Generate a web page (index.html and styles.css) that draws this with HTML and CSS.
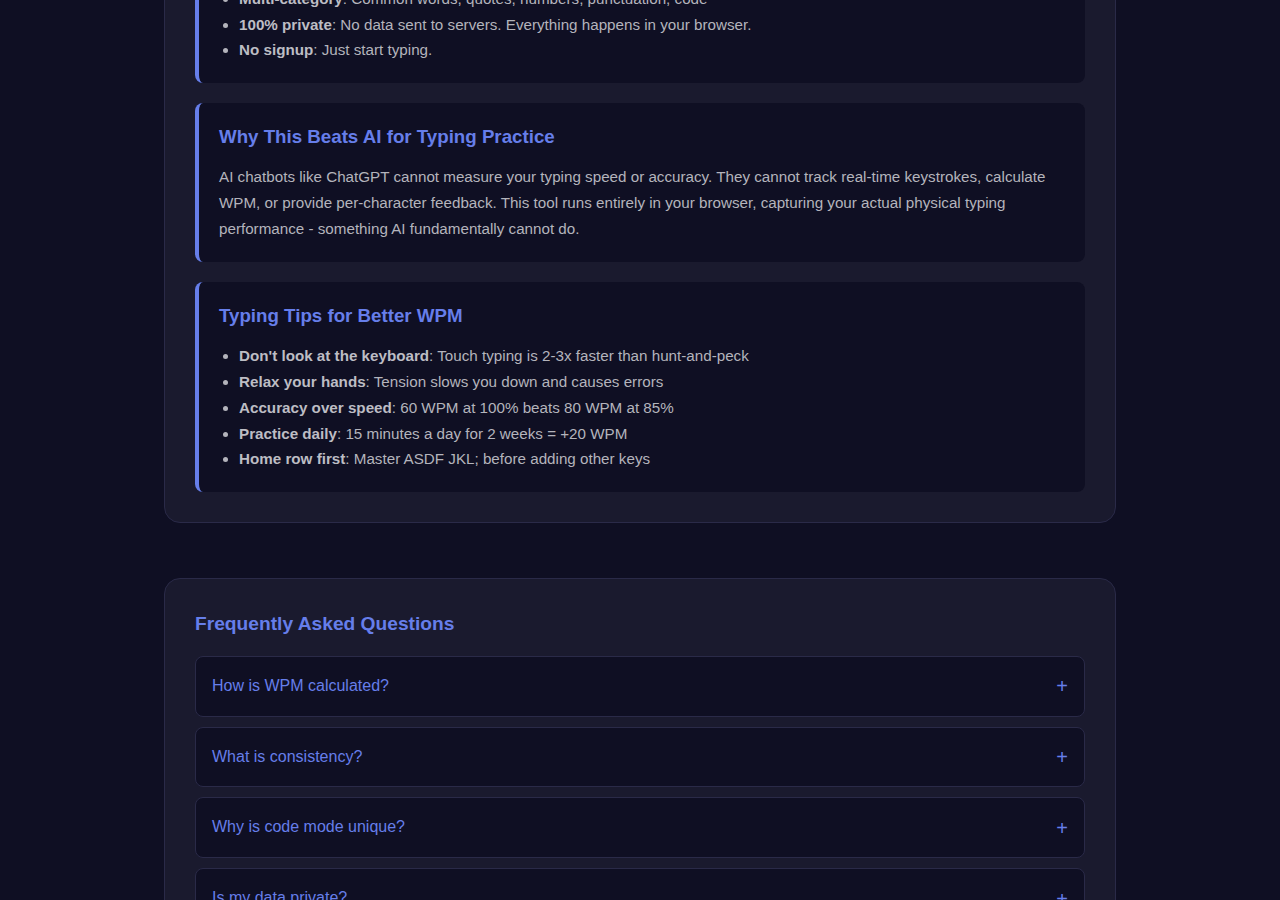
FILE: index.html
```html
<!DOCTYPE html>
<html lang="en">
<head>
  <meta charset="UTF-8"/>
  <meta name="viewport" content="width=device-width, initial-scale=1.0"/>
  <title>Typing Speed Test</title>
  <link rel="stylesheet" href="styles.css">
</head>
<body>
  <main class="page">
    <section class="panel">
      <div class="info-card">
        <h3>Features</h3>
        <ul>
          <li><strong>Real-time stats</strong>: Live WPM, accuracy and consistency as you type</li>
          <li><strong>Code mode</strong>: Practice brackets, operators and indentation</li>
          <li><strong>Multi-category</strong>: Common words, quotes, numbers, punctuation, code</li>
          <li><strong>100% private</strong>: No data sent to servers. Everything happens in your browser.</li>
          <li><strong>No signup</strong>: Just start typing.</li>
        </ul>
      </div>

      <div class="info-card">
        <h3>Why This Beats AI for Typing Practice</h3>
        <p>AI chatbots like ChatGPT cannot measure your typing speed or accuracy. They cannot track real-time keystrokes, calculate WPM, or provide per-character feedback. This tool runs entirely in your browser, capturing your actual physical typing performance - something AI fundamentally cannot do.</p>
      </div>

      <div class="info-card">
        <h3>Typing Tips for Better WPM</h3>
        <ul>
          <li><strong>Don't look at the keyboard</strong>: Touch typing is 2-3x faster than hunt-and-peck</li>
          <li><strong>Relax your hands</strong>: Tension slows you down and causes errors</li>
          <li><strong>Accuracy over speed</strong>: 60 WPM at 100% beats 80 WPM at 85%</li>
          <li><strong>Practice daily</strong>: 15 minutes a day for 2 weeks = +20 WPM</li>
          <li><strong>Home row first</strong>: Master ASDF JKL; before adding other keys</li>
        </ul>
      </div>
    </section>

    <section class="panel faq">
      <h2>Frequently Asked Questions</h2>
      <div class="faq-item"><button class="faq-q">How is WPM calculated?<span class="plus">+</span></button></div>
      <div class="faq-item"><button class="faq-q">What is consistency?<span class="plus">+</span></button></div>
      <div class="faq-item"><button class="faq-q">Why is code mode unique?<span class="plus">+</span></button></div>
      <div class="faq-item"><button class="faq-q">Is my data private?<span class="plus">+</span></button></div>
      <div class="faq-item"><button class="faq-q">How can I improve my typing speed?<span class="plus">+</span></button></div>
    </section>
  </main>
</body>
</html>
```

FILE: styles.css
```css
body { margin: 0; background: #0f0f23; font-family: "Liberation Sans", Arial, sans-serif; color: #b4b4bc; }
.page { width: 952px; margin: -158px auto 40px; }
.panel { background: #1a1a2e; border: 1px solid #2a2a48; border-radius: 16px; padding: 30px; }
.panel + .panel { margin-top: 55px; }
.info-card { background: #0f0f23; border-left: 4px solid #667eea; border-radius: 8px; padding: 20px; }
.info-card + .info-card { margin-top: 20px; }
.info-card h3 { margin: 0 0 13px; color: #667eea; font-size: 1.17rem; line-height: 1.5; }
.info-card p { margin: 0; font-size: 0.95rem; line-height: 1.7; }
.info-card ul { margin: 0; padding-left: 20px; font-size: 0.95rem; line-height: 1.7; }
.info-card strong { color: #bdbdc4; }
.faq h2 { margin: 0 0 17px; padding-top: 1px; color: #667eea; font-size: 1.2rem; line-height: 1.5; }
.faq-item { background: #0f0f23; border: 1px solid #2a2a48; border-radius: 8px; margin-bottom: 10px; }
.faq-q { display: flex; justify-content: space-between; align-items: center; width: 100%; background: none; border: none; padding: 18px 16px; font-family: inherit; font-size: 1rem; line-height: 1.42; color: #667eea; text-align: left; cursor: pointer; }
.plus { font-size: 1.25rem; line-height: 1; }
```
